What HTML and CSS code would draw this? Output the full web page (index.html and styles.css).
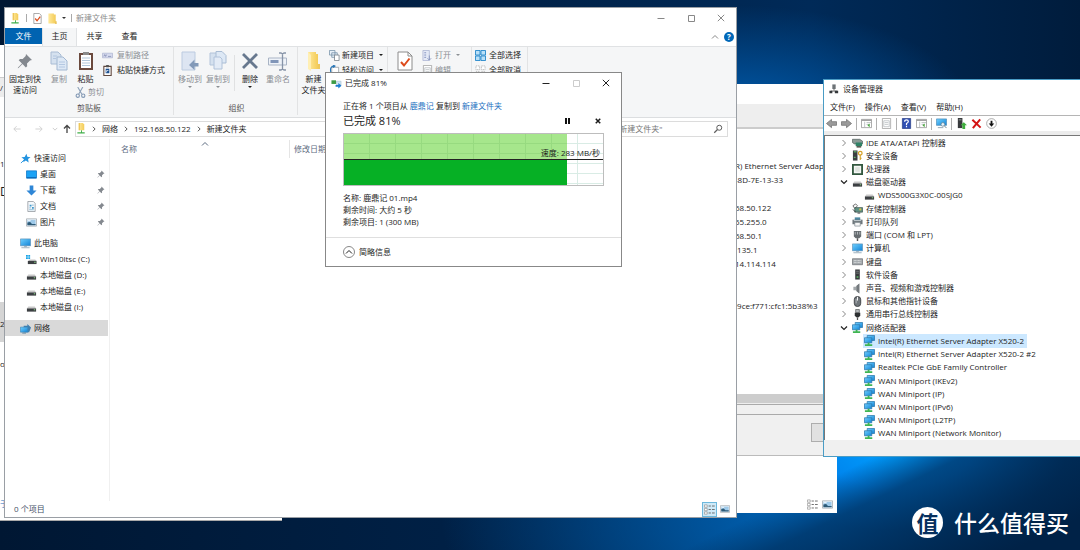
FILE: index.html
```html
<!DOCTYPE html>
<html lang="zh-CN">
<head>
<meta charset="utf-8">
<title>新建文件夹</title>
<link rel="stylesheet" href="styles.css">
</head>
<body>
<svg class="sprite" aria-hidden="true">
  <defs>
    <linearGradient id="screen" x1="0" y1="0" x2="1" y2="1"><stop offset="0" stop-color="#6fd0ff"/><stop offset="1" stop-color="#1283d6"/></linearGradient>
    <linearGradient id="gold" x1="0" y1="0" x2="1" y2="0"><stop offset="0" stop-color="#ffe99c"/><stop offset="1" stop-color="#f3cb57"/></linearGradient>
  </defs>
  <symbol id="netfolder" viewBox="0 0 12 12"><path d="M3 0h5v1h1v7H3z" fill="url(#gold)"/><path d="M3 0h1v8H3z" fill="#e5b93f"/><path d="M5.500 8h1v2h3v1.500h-8V10h4z" fill="#3fae49"/></symbol>
  <symbol id="folder" viewBox="0 0 12 12"><path d="M1.500 0.500h6v1h2v10h-8z" fill="url(#gold)"/><path d="M9 9h1.500v3H9z" fill="#e7bd4a"/></symbol>
  <symbol id="prop" viewBox="0 0 12 12"><path d="M2 .5h6l2 2v9H2z" fill="#fff" stroke="#8b8b8b" stroke-width=".8"/><path d="M3.500 6l2 2.500L9 4" fill="none" stroke="#dd4b1c" stroke-width="1.400"/></symbol>
  <symbol id="pin" viewBox="0 0 16 16"><path d="M9 1l6 6-2 .5-3 3 .2 2.700-1.400 1.300L5.500 11 1.500 15l-.7.200L1 14.500l4-4-3.300-3.300L3 5.900l2.700.1 3-3z" fill="#84898f"/></symbol>
  <symbol id="copy" viewBox="0 0 18 20"><path d="M1 1h7l3 3v9H1z" fill="#d5e1ef" stroke="#a9bcd4"/><path d="M7 6h6l4 4v9H7z" fill="#dde8f5" stroke="#a3b8d2"/><path d="M9 11h6M9 13.500h6M9 16h6M3 5h4M3 7.500h3" stroke="#a9bfdd" stroke-width=".8"/></symbol>
  <symbol id="copyto" viewBox="0 0 18 20"><path d="M1 2h8v12H1z" fill="#d5e1ef" stroke="#b3c4da"/><path d="M7 .5h6l4 4V12H7z" fill="#dde8f5" stroke="#a9bcd4"/><path d="M5 6h6l2 2v10H5z" fill="#e3ebf6" stroke="#b0c2da"/></symbol>
  <symbol id="paste" viewBox="0 0 16 20"><path d="M1 2h14v17H1z" fill="#6b4a3e"/><path d="M3 4h10v13H3z" fill="#fff"/><path d="M5 1h6v3H5z" fill="#8a8a8a"/><path d="M4 7h8M4 9.500h8M4 12h8M4 14.500h8" stroke="#9eb9d1" stroke-width=".8"/></symbol>
  <symbol id="pathcopy" viewBox="0 0 12 12"><path d="M.5 3.500h11v5H.5z" fill="#d6daee" stroke="#aeb5d0" stroke-width=".8"/><path d="M2 7l1-2 1 2 1-2M6.500 7h3.500" stroke="#7c86ad" fill="none" stroke-width=".8"/></symbol>
  <symbol id="shortcut" viewBox="0 0 12 12"><path d="M2 1.500h8v10H2z" fill="#fff" stroke="#60483f" stroke-width="1.200"/><path d="M4.500 0h3v2.500h-3z" fill="#555"/><path d="M4 4h4v5H4z" fill="#1b4f8f"/><path d="M5 8V6h2" stroke="#fff" fill="none" stroke-width=".8"/></symbol>
  <symbol id="cut" viewBox="0 0 12 12"><path d="M3 0l4.500 8M8.500 0L4 8" stroke="#8ea1b8" stroke-width="1.200"/><circle cx="3" cy="9.500" r="1.800" fill="none" stroke="#8298b4" stroke-width="1.200"/><circle cx="9" cy="9.500" r="1.800" fill="none" stroke="#8298b4" stroke-width="1.200"/></symbol>
  <symbol id="moveto" viewBox="0 0 18 20"><path d="M1 1h13v18H1z" fill="#dde5f2" stroke="#bccbe0"/><path d="M17.500 12h-4V8.500L8 14l5.500 5v-3.500h4z" fill="#8299b8"/></symbol>
  <symbol id="delete" viewBox="0 0 18 20"><path d="M2 3l14 14M16 3L2 17" stroke="#67788e" stroke-width="2.800"/></symbol>
  <symbol id="rename" viewBox="0 0 20 20"><path d="M.5 7h18v7H.5z" fill="#eef2f8" stroke="#a9b4c5"/><path d="M2.500 9h8v3h-8z" fill="#8095b8"/><path d="M11 2h2l1.500 1L16 2h2M14.500 3v15M11 19h2l1.500-1 1.500 1h2" fill="none" stroke="#8794a8" stroke-width="1.300"/></symbol>
  <symbol id="bigfolder" viewBox="0 0 16 20"><path d="M2 1h8v2h2v15H2z" fill="url(#gold)"/><path d="M2 1l3 3v16l-3-2z" fill="#ffefb4"/><path d="M12 13h2v5h-2z" fill="#edc75e"/></symbol>
  <symbol id="newitem" viewBox="0 0 12 12"><path d="M.5.5h6v5h-6zM3 3h6v5H3z" fill="#e8f1f8" stroke="#6d8aa3" stroke-width=".8"/><path d="M6 5.500h5v6H6z" fill="#fff" stroke="#6c7680" stroke-width=".8"/></symbol>
  <symbol id="easy" viewBox="0 0 12 12"><path d="M3 2.500h7.500v9H3z" fill="#fff" stroke="#8c969e" stroke-width=".8"/><path d="M6 1C2 1 1 4 2 8M4.500 0l2 1.200-2 1.500" stroke="#2b78b8" fill="none" stroke-width="1.200"/></symbol>
  <symbol id="bigprop" viewBox="0 0 16 20"><path d="M1 1h10l4 4v14H1z" fill="#fff" stroke="#8c8c8c"/><path d="M11 1v4h4" fill="none" stroke="#8c8c8c"/><path d="M4 11l3 3.500 5.500-7" fill="none" stroke="#dd4b1c" stroke-width="2"/></symbol>
  <symbol id="open" viewBox="0 0 12 12"><path d="M1 .5h7v11H1z" fill="#e4e9f6" stroke="#a7b1d0" stroke-width=".8"/><path d="M2.500 3h2M2.500 5.500h2M2.500 8h2" stroke="#7f8dbb"/><path d="M8 6v5M6 9l2 2 2-2" stroke="#8795bd" fill="none"/></symbol>
  <symbol id="selall" viewBox="0 0 12 12"><path d="M.5.5h5v5h-5zM6.500.5h5v5h-5zM.5 6.500h5v5h-5zM6.500 6.500h5v5h-5z" fill="#b9e0f8" stroke="#2286c9"/></symbol>
  <symbol id="selnone" viewBox="0 0 12 12"><path d="M1 1h4v4H1zM7 1h4v4H7zM1 7h4v4H1zM7 7h4v4H7z" fill="#fff" stroke="#a9a9a9" stroke-width=".8" stroke-dasharray="1.500 .8"/></symbol>
  <symbol id="star" viewBox="0 0 12 12"><path d="M7 .8l1 3.400 3.500.3-2.700 2 .6 3.800-3-2L3.500 10l.8-3.200L1.500 4.500l3.600-.2z" fill="#2494e0"/><path d="M4.500 7.500L1 11" stroke="#2494e0"/></symbol>
  <symbol id="desktop" viewBox="0 0 12 12"><path d="M.5 2h11v8H.5z" fill="#1aa2f5" stroke="#0a72c4" stroke-width=".8"/><path d="M1 9h10v1H1z" fill="#0a5ea8"/></symbol>
  <symbol id="down" viewBox="0 0 12 12"><path d="M4 .5h4V6h3.500L6 11.500.5 6H4z" fill="#2e86d6"/></symbol>
  <symbol id="doc" viewBox="0 0 12 12"><path d="M2 .5h6l2 2v9H2z" fill="#f4f8fb" stroke="#8a9096" stroke-width=".8"/><path d="M4 4h2v2H4zM6.500 6.500h2v2h-2z" fill="#3d97cc"/><path d="M3.500 7.500h2M3.500 9.500h5M6.500 4.500h2" stroke="#6fa9cb" stroke-width=".8"/></symbol>
  <symbol id="pic" viewBox="0 0 12 12"><path d="M.5 2h11v8H.5z" fill="#fff" stroke="#9aa2a8" stroke-width=".8"/><path d="M1.500 3h9v6h-9z" fill="#9ec9e9"/><path d="M1.500 6l3-.5 2 2h4V9h-9z" fill="#2d5a77"/><path d="M2 4h3" stroke="#fff"/></symbol>
  <symbol id="pc" viewBox="0 0 12 12"><path d="M.5 1h11v7.500H.5z" fill="url(#screen)" stroke="#5a8eb5" stroke-width=".7"/><path d="M4.500 9h3v1h-3z" fill="#8ca1af"/><path d="M1.500 10h9v1.200h-9z" fill="#a9b9c4"/></symbol>
  <symbol id="drive" viewBox="0 0 12 12"><path d="M2.500 5h7l1.500 2H1z" fill="#c9c9c9"/><path d="M1 7h10v3.500H1z" fill="#3c3f42"/><path d="M8.500 8h1.500v1H8.500z" fill="#8fe08a"/></symbol>
  <symbol id="windrive" viewBox="0 0 12 12"><path d="M0 1h2v2H0zM2.500 1h2v2h-2zM0 3.500h2v2H0zM2.500 3.500h2v2h-2z" fill="#17a3e6"/><path d="M4 6h6l1.500 1.500h-9z" fill="#c9c9c9"/><path d="M2 7.500h9.500v3.500H2z" fill="#3c3f42"/><path d="M9 8.500h1.500v1H9z" fill="#8fe08a"/></symbol>
  <symbol id="network" viewBox="0 0 12 12"><path d="M4 3h4V1l4 4-2 5H4z" fill="#3e7fb1"/><path d="M.5 4.500h8v5.500h-8z" fill="url(#screen)" stroke="#4486b5" stroke-width=".7"/><path d="M2.500 11h4" stroke="#58829f"/></symbol>
  <symbol id="adapter" viewBox="0 0 12 12"><path d="M3.500.5h8v5.500h-8z" fill="url(#screen)" stroke="#2a75a9" stroke-width=".8"/><path d="M.5 3h8v5.500h-8z" fill="url(#screen)" stroke="#2a75a9" stroke-width=".8"/><path d="M4 8.500h2v1.500H9v2H1v-2h3z" fill="#3fb553"/></symbol>
  <symbol id="ide" viewBox="0 0 12 12"><path d="M.5 2.500h8l3 2v3h-9L.5 6z" fill="#8b9a96" stroke="#4a5553" stroke-width=".7"/><path d="M4 6h7v4H4z" fill="#2f8266"/><path d="M5 10h5v1.500H5z" fill="#413f36"/></symbol>
  <symbol id="secure" viewBox="0 0 12 12"><path d="M1 .5h5v11H1z" fill="#3a3d40"/><path d="M2 2h3M2 8h2" stroke="#67d073"/><circle cx="9" cy="3.500" r="2" fill="none" stroke="#d6a128" stroke-width="1.400"/><path d="M9 5v6M9 9h1.500" stroke="#d6a128" stroke-width="1.200"/></symbol>
  <symbol id="cpu" viewBox="0 0 12 12"><path d="M1 1h10v10H1z" fill="#f5f7f5" stroke="#32583f" stroke-width="2"/><path d="M3.500 3.500h5v5h-5z" fill="#dfe4df"/></symbol>
  <symbol id="storage" viewBox="0 0 12 12"><path d="M1 3l3-2 2 2-3 3z" fill="#f7f7f7" stroke="#444" stroke-width=".8"/><path d="M3 5h8.500v5H3z" fill="#5f9184" stroke="#364c47" stroke-width=".7"/><path d="M1 7l3 3M6 11h3" stroke="#34383a"/><circle cx="9" cy="7" r="1.200" fill="#d4c04b"/></symbol>
  <symbol id="printer" viewBox="0 0 12 12"><path d="M3 1.500h6V5H3z" fill="#4c88a2"/><path d="M.5 4h11v5H.5z" fill="#6d767b"/><path d="M3 7h6v4H3z" fill="#f6f6f6" stroke="#77838a" stroke-width=".7"/><path d="M2 5h8" stroke="#c9d2d6"/></symbol>
  <symbol id="port" viewBox="0 0 12 12"><path d="M2 1h8v6L8 9H4L2 7z" fill="#666c70"/><path d="M3.500 2v3M6 2v3M8.500 2v3" stroke="#b7bcbf"/><path d="M6 9v3" stroke="#555" stroke-width="1.600"/></symbol>
  <symbol id="keyboard" viewBox="0 0 12 12"><path d="M.5 3h11v6.500H.5z" fill="#a4a9ad" stroke="#6c7175" stroke-width=".8"/><path d="M2 5h8M2 7h8" stroke="#dfe2e4" stroke-dasharray="1 .5"/></symbol>
  <symbol id="software" viewBox="0 0 12 12"><path d="M3.500.5h5v11h-5z" fill="#383b3d"/><path d="M4.500 2.500h3M4.500 4.500h3" stroke="#8b8f91" stroke-width=".8"/><path d="M5 8h2v1.500H5z" fill="#62c86c"/></symbol>
  <symbol id="sound" viewBox="0 0 12 12"><path d="M1.500 4H4L8 .5v11L4 8H1.500z" fill="#a3a8ab"/><path d="M5 3l3-2.500v11L5 9z" fill="#74797d"/></symbol>
  <symbol id="mouse" viewBox="0 0 12 12"><rect x="2.500" y=".5" width="7" height="11" rx="3.500" fill="#70767b" stroke="#3c4043"/><path d="M6 1v4" stroke="#fff"/><path d="M4.500 3v5" stroke="#b8bdc1"/></symbol>
  <symbol id="usb" viewBox="0 0 12 12"><path d="M4 .5h4V4H4z" fill="#b7bbbd" stroke="#4a4d4f" stroke-width=".7"/><path d="M3 4h6v3L7.500 9h-3L3 7z" fill="#2d2f31"/><path d="M6 9v3" stroke="#555" stroke-width="1.400"/></symbol>
  <symbol id="devmgr" viewBox="0 0 12 12"><path d="M4 .5h4V6H4z" fill="#6d7377"/><path d="M6 6v2M2 8.500h8" stroke="#555"/><path d="M.5 8h3.500v3H.5zM7 8h4v3H7z" fill="#34383b"/></symbol>
  <symbol id="back" viewBox="0 0 12 12"><path d="M6 1.500V4h5.500v4H6v2.500L.5 6z" fill="#9b9b9b" stroke="#6d6d6d" stroke-width=".8"/></symbol>
  <symbol id="fwd" viewBox="0 0 12 12"><path d="M6 1.500V4H.5v4H6v2.500L11.500 6z" fill="#9b9b9b" stroke="#6d6d6d" stroke-width=".8"/></symbol>
  <symbol id="pane" viewBox="0 0 12 12"><path d="M.5 1.500h11v9H.5z" fill="#fff" stroke="#8c8c8c" stroke-width=".8"/><path d="M.5 2.500h11" stroke="#9d9d9d" stroke-width="1.400"/><path d="M4 4v6M6 5h5M6 7h3" stroke="#a9aeb2" stroke-width=".8"/><path d="M9.500 6v4L7 8z" fill="#48a63c"/></symbol>
  <symbol id="sheet" viewBox="0 0 12 12"><path d="M1.500.5h9v11h-9z" fill="#fff" stroke="#999" stroke-width=".8"/><path d="M3 3h6v6.500H3zM4 5h4M4 7h4" fill="none" stroke="#b3b9bd" stroke-width=".8"/></symbol>
  <symbol id="help" viewBox="0 0 12 12"><path d="M1.500.5h9v11h-9z" fill="#2f4fb3" stroke="#1d337c" stroke-width=".7"/><path d="M4 4q0-2 2-2t2 1.800Q8 5 6 6v1.500M6 8.500V10" stroke="#fff" fill="none" stroke-width="1.300"/></symbol>
  <symbol id="scan" viewBox="0 0 12 12"><path d="M.5 1h11v7H.5z" fill="url(#screen)" stroke="#4b87b0" stroke-width=".7"/><path d="M2 10.500h6" stroke="#8fa2af"/><circle cx="7.500" cy="7" r="2" fill="#e5f5ff" stroke="#64808f" stroke-width=".8"/><path d="M9 8.500l2.500 2.500" stroke="#64808f"/></symbol>
  <symbol id="update" viewBox="0 0 12 12"><path d="M2 0h5v11H2z" fill="#383b3d"/><path d="M3 2h3" stroke="#9ca1a4"/><path d="M8.500 4.500L12 8h-2v4H7V8H5z" fill="#3fae3e"/></symbol>
  <symbol id="redx" viewBox="0 0 12 12"><path d="M1.500 2l9 8.500M10 1.500L2 11" stroke="#d41414" stroke-width="2.200"/></symbol>
  <symbol id="downcircle" viewBox="0 0 12 12"><circle cx="6" cy="6" r="5.300" fill="#fff" stroke="#8d8d8d" stroke-width=".8"/><path d="M5 3h2v3h2L6 9.500 3 6h2z" fill="#111"/></symbol>
  <symbol id="transfer" viewBox="0 0 12 12"><path d="M.5 2.500h5v4h-5z" fill="#3d9b45"/><path d="M6 3.500h5v4H6z" fill="#cfe5f4" stroke="#9bb2c3" stroke-width=".5"/><path d="M5 7.500h3V5.500L11.500 8.500 8 11.500v-2H5z" fill="#1c7cd0"/></symbol>
  <symbol id="details" viewBox="0 0 12 12"><path d="M.5 1h3v2.500h-3zM.5 4.800h3v2.500h-3zM.5 8.600h3v2.500h-3z" fill="#fff" stroke="#8c8c8c" stroke-width=".7"/><path d="M5 2.200h2.500M5 6h2.500M5 9.800h2.500M8.700 2.200h3M8.700 6h3M8.700 9.800h3" stroke="#666"/></symbol>
  <symbol id="search" viewBox="0 0 12 12"><circle cx="7.500" cy="4.500" r="3" fill="none" stroke="#5e5e5e" stroke-width="1.200"/><path d="M5.400 6.600L1.500 10.500" stroke="#5e5e5e" stroke-width="1.500"/></symbol>
  <symbol id="chev" viewBox="0 0 8 8"><path d="M2.500 1l3 3-3 3" fill="none" stroke="currentColor"/></symbol>
  <symbol id="chevdown" viewBox="0 0 8 8"><path d="M1 2.500l3 3 3-3" fill="none" stroke="currentColor" stroke-width="1.200"/></symbol>
  <symbol id="chevup" viewBox="0 0 8 8"><path d="M1 5.500l3-3 3 3" fill="none" stroke="currentColor"/></symbol>
  <symbol id="larrow" viewBox="0 0 10 10"><path d="M9.500 5h-8M4.500 1.500L1 5l3.500 3.500" fill="none" stroke="currentColor"/></symbol>
  <symbol id="rarrow" viewBox="0 0 10 10"><path d="M.5 5h8M5.500 1.500L9 5 5.500 8.500" fill="none" stroke="currentColor"/></symbol>
  <symbol id="uarrow" viewBox="0 0 10 10"><path d="M5 9V1.500M2 4.500l3-3 3 3" fill="none" stroke="currentColor" stroke-width="1.300"/></symbol>
  <symbol id="min" viewBox="0 0 8 8"><path d="M.5 4.500h7" stroke="currentColor"/></symbol>
  <symbol id="max" viewBox="0 0 8 8"><path d="M1.500 1.500h6v6h-6z" fill="none" stroke="currentColor"/></symbol>
  <symbol id="close" viewBox="0 0 8 8"><path d="M.8.8l6.400 6.400M7.200.8L.8 7.200" stroke="currentColor"/></symbol>
  <symbol id="boldclose" viewBox="0 0 8 8"><path d="M1 1l6 6M7 1L1 7" stroke="currentColor" stroke-width="2"/></symbol>
</svg>

<main class="desktop">
  <section class="window back-left" aria-label="后台窗口">
    <div class="strip-a">/</div>
    <div class="peek one">1</div>
    <div class="peek large">D</div>
    <div class="strip-b">2</div>
    <div class="peek or">or</div>
    <a class="peek link" href="#">于</a>
  </section>

  <section class="window back-mid" aria-label="网络连接">
    <div class="mid-title"></div>
    <div class="mid-bar"></div>
    <div class="mid-details">
      <p>R) Ethernet Server Adap</p>
      <p>-8D-7E-13-33</p>
      <p>&nbsp;</p>
      <p>68.50.122</p>
      <p>55.255.0</p>
      <p>68.50.1</p>
      <p>.135.1</p>
      <p>14.114.114</p>
      <p>&nbsp;</p>
      <p>&nbsp;</p>
      <p>:9ce:f771:cfc1:5b38%3</p>
    </div>
    <div class="mid-scroll"></div>
    <div class="mid-line"></div>
    <div class="mid-footer"><button class="mid-button" aria-label="关闭"></button></div>
    <div class="mid-status">
      <svg class="i12"><use href="#details"/></svg>
      <svg class="i12"><use href="#pic"/></svg>
    </div>
  </section>

  <section class="window explorer" aria-label="新建文件夹">
    <header class="titlebar">
      <svg class="i12"><use href="#netfolder"/></svg><i class="bar"></i>
      <svg class="i12"><use href="#prop"/></svg>
      <svg class="i12"><use href="#folder"/></svg>
      <i class="caret under"></i><i class="bar last"></i>
      <span class="title">新建文件夹</span>
      <div class="controls">
        <button aria-label="最小化"><svg class="i8"><use href="#min"/></svg></button>
        <button aria-label="最大化"><svg class="i8"><use href="#max"/></svg></button>
        <button aria-label="关闭"><svg class="i8"><use href="#close"/></svg></button>
      </div>
    </header>
    <nav class="tabs">
      <button class="tab file">文件</button>
      <button class="tab active">主页</button>
      <button class="tab">共享</button>
      <button class="tab">查看</button>
      <div class="tabs-end"><svg class="i8"><use href="#chevup"/></svg><button class="helpdot" aria-label="帮助">?</button></div>
    </nav>
    <div class="ribbon">
      <div class="group clip">
        <div class="group-body">
          <button class="big wide"><svg class="i16"><use href="#pin"/></svg><span>固定到快<br>速访问</span></button>
          <button class="big off"><svg class="i20"><use href="#copy"/></svg><span>复制</span></button>
          <div class="stack">
            <div class="pair">
              <button class="big"><svg class="i20"><use href="#paste"/></svg><span>粘贴</span></button>
              <div class="list">
                <button class="small off"><svg class="i12"><use href="#pathcopy"/></svg>复制路径</button>
                <button class="small"><svg class="i12"><use href="#shortcut"/></svg>粘贴快捷方式</button>
              </div>
            </div>
            <button class="small off"><svg class="i12"><use href="#cut"/></svg>剪切</button>
          </div>
        </div>
        <div class="group-name">剪贴板</div>
      </div>
      <div class="group org">
        <div class="group-body">
          <button class="big off"><svg class="i20"><use href="#moveto"/></svg><span>移动到</span><i class="caret"></i></button>
          <button class="big off"><svg class="i20"><use href="#copyto"/></svg><span>复制到</span><i class="caret"></i></button>
          <i class="rule"></i>
          <button class="big"><svg class="i20"><use href="#delete"/></svg><span>删除</span><i class="caret"></i></button>
          <button class="big off"><svg class="i20"><use href="#rename"/></svg><span>重命名</span></button>
        </div>
        <div class="group-name">组织</div>
      </div>
      <div class="group create">
        <div class="group-body">
          <button class="big wide"><svg class="i20"><use href="#bigfolder"/></svg><span>新建<br>文件夹</span></button>
          <div class="list">
            <button class="small"><svg class="i12"><use href="#newitem"/></svg>新建项目<i class="caret"></i></button>
            <button class="small"><svg class="i12"><use href="#easy"/></svg>轻松访问<i class="caret"></i></button>
          </div>
        </div>
      </div>
      <div class="group opening">
        <div class="group-body">
          <button class="big wide" aria-label="属性"><svg class="i20"><use href="#bigprop"/></svg></button>
          <div class="list">
            <button class="small off"><svg class="i12"><use href="#open"/></svg>打开<i class="caret"></i></button>
            <button class="small off"><svg class="i12"><use href="#sheet"/></svg>编辑</button>
          </div>
        </div>
      </div>
      <div class="group select">
        <div class="group-body">
          <div class="list">
            <button class="small"><svg class="i12"><use href="#selall"/></svg>全部选择</button>
            <button class="small"><svg class="i12"><use href="#selnone"/></svg>全部取消</button>
          </div>
        </div>
      </div>
    </div>
    <div class="address">
      <button class="arrow first faint" aria-label="后退"><svg class="i8"><use href="#larrow"/></svg></button>
      <button class="arrow faint" aria-label="前进"><svg class="i8"><use href="#rarrow"/></svg></button>
      <button class="arrow tiny faint" aria-label="最近"><svg class="i6"><use href="#chevdown"/></svg></button>
      <button class="arrow up" aria-label="上移"><svg class="i10"><use href="#uarrow"/></svg></button>
      <div class="crumbs">
        <svg class="i12"><use href="#netfolder"/></svg>
        <svg class="i6"><use href="#chev"/></svg><a href="#">网络</a>
        <svg class="i6"><use href="#chev"/></svg><a href="#">192.168.50.122</a>
        <svg class="i6"><use href="#chev"/></svg><a href="#">新建文件夹</a>
      </div>
      <label class="search"><input type="text" placeholder='搜索"新建文件夹"' aria-label="搜索"><svg class="i10"><use href="#search"/></svg></label>
    </div>
    <div class="content">
      <aside class="places">
        <a class="place top" href="#"><svg class="i12"><use href="#star"/></svg>快速访问</a>
        <a class="place" href="#"><svg class="i12"><use href="#desktop"/></svg>桌面<svg class="i8 pinned"><use href="#pin"/></svg></a>
        <a class="place" href="#"><svg class="i12"><use href="#down"/></svg>下载<svg class="i8 pinned"><use href="#pin"/></svg></a>
        <a class="place" href="#"><svg class="i12"><use href="#doc"/></svg>文档<svg class="i8 pinned"><use href="#pin"/></svg></a>
        <a class="place" href="#"><svg class="i12"><use href="#pic"/></svg>图片<svg class="i8 pinned"><use href="#pin"/></svg></a>
        <a class="place top gap" href="#"><svg class="i12"><use href="#pc"/></svg>此电脑</a>
        <a class="place" href="#"><svg class="i12"><use href="#windrive"/></svg>Win10ltsc (C:)</a>
        <a class="place" href="#"><svg class="i12"><use href="#drive"/></svg>本地磁盘 (D:)</a>
        <a class="place" href="#"><svg class="i12"><use href="#drive"/></svg>本地磁盘 (E:)</a>
        <a class="place" href="#"><svg class="i12"><use href="#drive"/></svg>本地磁盘 (I:)</a>
        <a class="place top gap current" href="#"><svg class="i12"><use href="#network"/></svg>网络</a>
      </aside>
      <div class="files">
        <div class="columns">
          <div class="col name"><span>名称</span><svg class="i8"><use href="#chevup"/></svg></div>
          <div class="col">修改日期</div>
        </div>
      </div>
    </div>
    <footer class="status">
      <span>0 个项目</span>
      <button class="view on" aria-label="详细信息"><svg class="i12"><use href="#details"/></svg></button>
      <button class="view" aria-label="大图标"><svg class="i10"><use href="#pic"/></svg></button>
    </footer>
  </section>

  <section class="window devices" aria-label="设备管理器">
    <header class="dev-title"><svg class="i10"><use href="#devmgr"/></svg>设备管理器</header>
    <nav class="menu"><button>文件(F)</button><button>操作(A)</button><button>查看(V)</button><button>帮助(H)</button></nav>
    <div class="tools">
      <button aria-label="后退"><svg class="i12"><use href="#back"/></svg></button>
      <button aria-label="前进"><svg class="i12"><use href="#fwd"/></svg></button><i></i>
      <button aria-label="控制台树"><svg class="i12"><use href="#pane"/></svg></button><i></i>
      <button aria-label="属性"><svg class="i12"><use href="#sheet"/></svg></button><i></i>
      <button aria-label="帮助"><svg class="i12"><use href="#help"/></svg></button>
      <button aria-label="操作窗格"><svg class="i12"><use href="#pane"/></svg></button><i></i>
      <button aria-label="扫描"><svg class="i12"><use href="#scan"/></svg></button><i></i>
      <button aria-label="更新"><svg class="i12"><use href="#update"/></svg></button>
      <button aria-label="卸载"><svg class="i12"><use href="#redx"/></svg></button>
      <button aria-label="禁用"><svg class="i12"><use href="#downcircle"/></svg></button>
    </div>
    <ul class="tree">
      <li><svg class="i8"><use href="#chev"/></svg><span><svg class="i12"><use href="#ide"/></svg>IDE ATA/ATAPI 控制器</span></li>
      <li><svg class="i8"><use href="#chev"/></svg><span><svg class="i12"><use href="#secure"/></svg>安全设备</span></li>
      <li><svg class="i8"><use href="#chev"/></svg><span><svg class="i12"><use href="#cpu"/></svg>处理器</span></li>
      <li class="expanded"><svg class="i8"><use href="#chevdown"/></svg><span><svg class="i12"><use href="#drive"/></svg>磁盘驱动器</span></li>
      <li class="child"><span><svg class="i12"><use href="#drive"/></svg>WDS500G3X0C-00SJG0</span></li>
      <li><svg class="i8"><use href="#chev"/></svg><span><svg class="i12"><use href="#storage"/></svg>存储控制器</span></li>
      <li><svg class="i8"><use href="#chev"/></svg><span><svg class="i12"><use href="#printer"/></svg>打印队列</span></li>
      <li><svg class="i8"><use href="#chev"/></svg><span><svg class="i12"><use href="#port"/></svg>端口 (COM 和 LPT)</span></li>
      <li><svg class="i8"><use href="#chev"/></svg><span><svg class="i12"><use href="#pc"/></svg>计算机</span></li>
      <li><svg class="i8"><use href="#chev"/></svg><span><svg class="i12"><use href="#keyboard"/></svg>键盘</span></li>
      <li><svg class="i8"><use href="#chev"/></svg><span><svg class="i12"><use href="#software"/></svg>软件设备</span></li>
      <li><svg class="i8"><use href="#chev"/></svg><span><svg class="i12"><use href="#sound"/></svg>声音、视频和游戏控制器</span></li>
      <li><svg class="i8"><use href="#chev"/></svg><span><svg class="i12"><use href="#mouse"/></svg>鼠标和其他指针设备</span></li>
      <li><svg class="i8"><use href="#chev"/></svg><span><svg class="i12"><use href="#usb"/></svg>通用串行总线控制器</span></li>
      <li class="expanded"><svg class="i8"><use href="#chevdown"/></svg><span><svg class="i12"><use href="#adapter"/></svg>网络适配器</span></li>
      <li class="child picked"><span><svg class="i12"><use href="#adapter"/></svg>Intel(R) Ethernet Server Adapter X520-2</span></li>
      <li class="child"><span><svg class="i12"><use href="#adapter"/></svg>Intel(R) Ethernet Server Adapter X520-2 #2</span></li>
      <li class="child"><span><svg class="i12"><use href="#adapter"/></svg>Realtek PCIe GbE Family Controller</span></li>
      <li class="child"><span><svg class="i12"><use href="#adapter"/></svg>WAN Miniport (IKEv2)</span></li>
      <li class="child"><span><svg class="i12"><use href="#adapter"/></svg>WAN Miniport (IP)</span></li>
      <li class="child"><span><svg class="i12"><use href="#adapter"/></svg>WAN Miniport (IPv6)</span></li>
      <li class="child"><span><svg class="i12"><use href="#adapter"/></svg>WAN Miniport (L2TP)</span></li>
      <li class="child"><span><svg class="i12"><use href="#adapter"/></svg>WAN Miniport (Network Monitor)</span></li>
    </ul>
    <footer class="dev-status"></footer>
  </section>

  <section class="window dialog" role="dialog" aria-label="已完成 81%">
    <header class="dlg-title">
      <svg class="i12"><use href="#transfer"/></svg>已完成 81%
      <div class="controls dark">
        <button aria-label="最小化"><svg class="i8"><use href="#min"/></svg></button>
        <button aria-label="最大化" disabled><svg class="i8"><use href="#max"/></svg></button>
        <button aria-label="关闭"><svg class="i8"><use href="#close"/></svg></button>
      </div>
    </header>
    <div class="dlg-body">
      <p>正在将 1 个项目从 <a href="#">鹿鼎记</a> 复制到 <a href="#">新建文件夹</a></p>
      <div class="headline">
        <h1>已完成 81%</h1>
        <button class="pause" aria-label="暂停"></button>
        <button class="cancel" aria-label="取消"><svg class="i6"><use href="#boldclose"/></svg></button>
      </div>
      <div class="chart">
        <div class="done"><div class="speed-area"></div></div>
        <div class="speed">速度: 283 MB/秒</div>
      </div>
      <p>名称: 鹿鼎记 01.mp4</p>
      <p>剩余时间: 大约 5 秒</p>
      <p>剩余项目: 1 (300 MB)</p>
    </div>
    <footer class="dlg-foot"><button><span class="ring"><svg class="i8"><use href="#chevup"/></svg></span>简略信息</button></footer>
  </section>

  <div class="watermark"><span class="seal">值</span>什么值得买</div>
</main>
</body>
</html>
```
FILE: styles.css
```css
* { box-sizing: border-box; }
body {
  margin: 0;
  font: 8px/12px "Open Sans", "Noto Sans CJK SC", sans-serif;
  color: #1c1c1c;
}
p, h1, ul { margin: 0; padding: 0; font-weight: 400; }
button, input { font: inherit; color: inherit; background: none; border: 0; padding: 0; margin: 0; }
a { color: inherit; text-decoration: none; }
svg { display: block; flex: none; }
.sprite { position: absolute; width: 0; height: 0; }
.i6 { width: 6px; height: 6px; }
.i8 { width: 8px; height: 8px; }
.i10 { width: 10px; height: 10px; }
.i12 { width: 11px; height: 11px; }
.i16 { width: 16px; height: 16px; }
.i20 { width: 20px; height: 20px; }

.desktop {
  position: relative;
  min-height: 100vh;
  overflow: hidden;
  background:
    linear-gradient(154deg, transparent 82%, rgba(0, 50, 98, .75) 86%, #002247 97%) no-repeat,
    radial-gradient(ellipse 170px 80px at 83% 82%, #00a0ff 0%, #0086ee 45%, transparent 100%) no-repeat,
    radial-gradient(ellipse 240px 110px at 68% 21%, #005cae 0%, transparent 100%) no-repeat,
    radial-gradient(ellipse 380px 180px at 76% 94%, #0066ba 0%, transparent 100%) no-repeat,
    linear-gradient(90deg, #001733 0%, #002249 50%, #002a58 75%, #001c3c 100%);
}
.window { position: absolute; display: flex; flex-direction: column; background: #fff; white-space: nowrap; }

/* windows at the back */
.back-left { left: 0; top: 45px; bottom: 29px; width: 282px; border-bottom: 1px solid #aaa; }
.strip-a { margin-top: 32px; height: 20px; padding-top: 4px; background: #ececec; border-top: 1px solid #ccc; }
.peek { height: 14px; }
.one { margin-top: 61px; }
.large { margin-top: 14px; font-size: 12px; }
.strip-b { margin-top: 102px; height: 40px; padding-top: 16px; background: #d5d5d5; }
.or { margin-top: 16px; }
.link { margin-top: auto; margin-bottom: 8px; color: #1a6fc0; }

.back-mid { left: 690px; right: 243px; top: 84px; bottom: 37px; overflow: hidden; }
.mid-title { flex: 0 0 20px; }
.mid-bar { flex: 0 0 25px; background: #eee; border-bottom: 2px solid #ccc; }
.mid-details { flex: 1; padding: 30px 0 0 45px; line-height: 14px; }
.mid-scroll { flex: 0 0 10px; background: #cdcdcd; border-bottom: 1px solid #eee; }
.mid-line { flex: 0 0 11px; background: #f0f0f0; border-top: 1px solid #aaa; border-bottom: 1px solid #aaa; }
.mid-footer { flex: 0 0 41px; display: flex; justify-content: flex-end; padding-top: 8px; background: #f0f0f0; border-bottom: 1px solid #bbb; }
.mid-button { width: 26px; height: 19px; border: 1px solid #adadad; background: #e1e1e1; }
.mid-status { flex: 0 0 57px; display: flex; align-items: flex-end; justify-content: flex-end; gap: 4px; padding: 3px 4px; }

/* explorer */
.explorer { left: 4px; right: 343px; top: 7px; bottom: 32px; border: 1px solid #9a9fa5; }
.titlebar { flex: 0 0 20px; display: flex; align-items: center; gap: 4px; padding-left: 5px; color: #8b8b8b; }
.bar { width: 1px; height: 8px; margin: 0 1px; background: #aaa; }
.bar.last { margin-right: 0; }
.caret { width: 0; height: 0; border: 2px solid transparent; border-top-color: currentColor; border-bottom-width: 0; }
.under { color: #333; }
.controls { display: flex; margin-left: auto; color: #888; }
.controls button { width: 30px; height: 20px; display: grid; place-items: center; }
.controls.dark { color: #222; }
.controls button:disabled { color: #ccc; }
.tabs { flex: 0 0 18px; display: flex; border-bottom: 1px solid #e0e2e4; }
.tab { width: 35px; height: 16px; }
.tab.file { width: 37px; background: #0063b1; color: #fff; }
.tab.active { height: 18px; padding-bottom: 2px; background: #f5f6f7; border: 1px solid #e0e2e4; border-width: 0 1px; }
.tabs-end { display: flex; align-items: center; gap: 5px; margin-left: auto; padding-right: 2px; color: #888; }
.helpdot { width: 10px; height: 10px; border-radius: 50%; background: #0067b8; color: #fff; line-height: 10px; font-weight: 700; }
.ribbon { flex: 0 0 71px; display: flex; background: #f5f6f7; border-bottom: 1px solid #dcdee0; }
.group { display: flex; flex-direction: column; border-right: 1px solid #e2e3e4; margin-bottom: 2px; }
.group-body { flex: 1; display: flex; }
.group-name { height: 14px; text-align: center; color: #555; line-height: 13px; }
.clip { width: 169px; }
.org { width: 124px; padding-left: 2px; }
.create { width: 90px; }
.opening { width: 84px; }
.select { width: 56px; padding-left: 3px; }
.big { width: 28px; display: flex; flex-direction: column; align-items: center; gap: 2px; line-height: 11px; padding-top: 4px; }
.ribbon .i16 { margin: 2px 0; }
.big.wide { width: 34px; }
.clip .wide { width: 40px; }
.create .wide { width: 31px; }
.off { color: #8b8f94; }
.stack .pair { display: flex; }
.stack > .small { padding-left: 2px; }
.stack .big { width: 25px; height: 39px; }
.list { display: flex; flex-direction: column; gap: 3px; padding-top: 2px; }
.small { display: flex; align-items: center; gap: 2px; height: 12px; }
.small .caret { margin-left: 3px; }
.pair .list { padding-left: 4px; }
.pair .small { gap: 4px; }
.select .small { gap: 3px; }
.rule { width: 1px; height: 36px; margin: 8px 1px 0 2px; background: #e0e1e2; }
.address { flex: 0 0 21px; display: flex; align-items: center; padding-right: 8px; }
.arrow { width: 20px; display: grid; place-items: center; color: #444; }
.arrow.first { width: 24px; }
.arrow.tiny { width: 12px; }
.arrow.up { width: 11px; }
.faint { color: #c8c8c8; }
.crumbs { flex: 1; height: 16px; display: flex; align-items: center; gap: 5px; margin: 0 6px 0 3px; border: 1px solid #dcdcdc; }
.crumbs .i12 { margin-right: -1px; }
.search { width: 133px; height: 16px; display: flex; align-items: center; padding: 0 4px; border: 1px solid #dcdcdc; }
.search input { flex: 1; min-width: 0; outline: 0; }
.search input::placeholder { color: #777; opacity: 1; }
.content { flex: 1; display: flex; min-height: 0; }
.places { width: 105px; padding-top: 11px; border-right: 1px solid #f0f0f0; }
.place { display: flex; align-items: center; gap: 3px; height: 16px; margin-right: 1px; padding: 0 3px 0 21px; }
.place.top { padding-left: 15px; }
.place.gap { margin-top: 5px; }
.place.current { background: #d9d9d9; }
.pinned { margin-left: auto; }
.files { flex: 1; }
.columns { display: flex; height: 19px; padding-top: 1px; color: #5c6b80; line-height: 17px; }
.col { padding-left: 4px; border-left: 1px solid #e5e5e5; }
.col.name { width: 179px; display: grid; grid-template-columns: 1fr 1fr 1fr; padding-left: 11px; border: 0; }
.col.name svg { margin: 0 auto; }
.status { flex: 0 0 16px; display: flex; align-items: center; padding: 0 4px 0 9px; color: #444f66; }
.view { width: 15px; height: 15px; display: grid; place-items: center; }
.view.on { margin-left: auto; background: #cfeaf8; border: 1px solid #6db8dc; }

/* device manager */
.devices { left: 823px; right: -60px; top: 79px; bottom: 93px; border: 1px solid #4a9cc5; }
.dev-title { flex: 0 0 18px; display: flex; align-items: center; gap: 4px; padding-left: 5px; }
.menu { flex: 0 0 18px; display: flex; align-items: center; gap: 10px; padding-left: 6px; border-bottom: 1px solid #b5b5b5; }
.tools { flex: 0 0 19px; display: flex; align-items: center; gap: 4px; padding-left: 2px; border-bottom: 4px solid #ececec; }
.tools i { width: 1px; height: 12px; background: #b0b0b0; }
.tree { flex: 1; display: flex; flex-direction: column; list-style: none; border-top: 1px solid #777; border-left: 1px solid #777; }
.tree li { flex: 1; min-height: 0; display: flex; align-items: center; gap: 3px; padding-left: 15px; }
.tree li > svg { color: #888; }
.tree .expanded > svg { color: #222; }
.tree span { display: flex; align-items: center; gap: 3px; align-self: stretch; padding: 0 3px 0 1px; }
.tree .child { padding-left: 38px; }
.picked span { background: #cce8ff; }
.dev-status { flex: 0 0 16px; background: #f0f0f0; }

/* copy progress */
.dialog { left: 325px; top: 72px; width: 297px; border: 1px solid #888; }
.dlg-title { display: flex; align-items: center; gap: 3px; height: 20px; padding-left: 5px; }
.dlg-body { padding: 7px 17px 9px; }
.dlg-body a { color: #1a6fc0; }
.headline { display: flex; align-items: center; height: 17px; }
.headline h1 { flex: 1; font-size: 11px; line-height: 16px; }
.pause { width: 5px; height: 6px; margin-right: 25px; border: solid #111; border-width: 0 2px; }
.cancel { margin-right: 3px; }
.chart {
  position: relative;
  height: 53px;
  margin: 4px 0 6px;
  border: 1px solid #bdbdbd;
  background: repeating-linear-gradient(90deg, transparent 0 25px, #d9ece5 25px 26px), repeating-linear-gradient(#fff 0 9px, #d9ece5 9px 10px);
}
.done {
  width: 86%;
  height: 100%;
  display: flex;
  align-items: flex-end;
  background: repeating-linear-gradient(90deg, transparent 0 25px, #97da80 25px 26px), repeating-linear-gradient(#a6e68c 0 9px, #97da80 9px 10px);
}
.speed-area { width: 100%; height: 50%; background: #06b025; }
.speed { position: absolute; left: 0; right: 0; bottom: 50%; padding-right: 3px; text-align: right; border-bottom: 1px solid #222; line-height: 13px; }
.dlg-foot { height: 29px; display: flex; align-items: center; padding-left: 17px; border-top: 1px solid #dfdfdf; }
.dlg-foot button { display: flex; align-items: center; gap: 4px; }
.ring { width: 12px; height: 12px; display: grid; place-items: center; border: 1px solid #888; border-radius: 50%; }

.watermark {
  position: absolute;
  right: 11px;
  bottom: 12px;
  display: flex;
  align-items: center;
  gap: 11px;
  color: #fff;
  font: 500 23px/31px "Noto Sans CJK SC", sans-serif;
}
.seal { width: 31px; height: 31px; border-radius: 50%; background: #fff; color: #06305e; text-align: center; font-size: 22px; font-weight: 700; line-height: 30px; }
```
